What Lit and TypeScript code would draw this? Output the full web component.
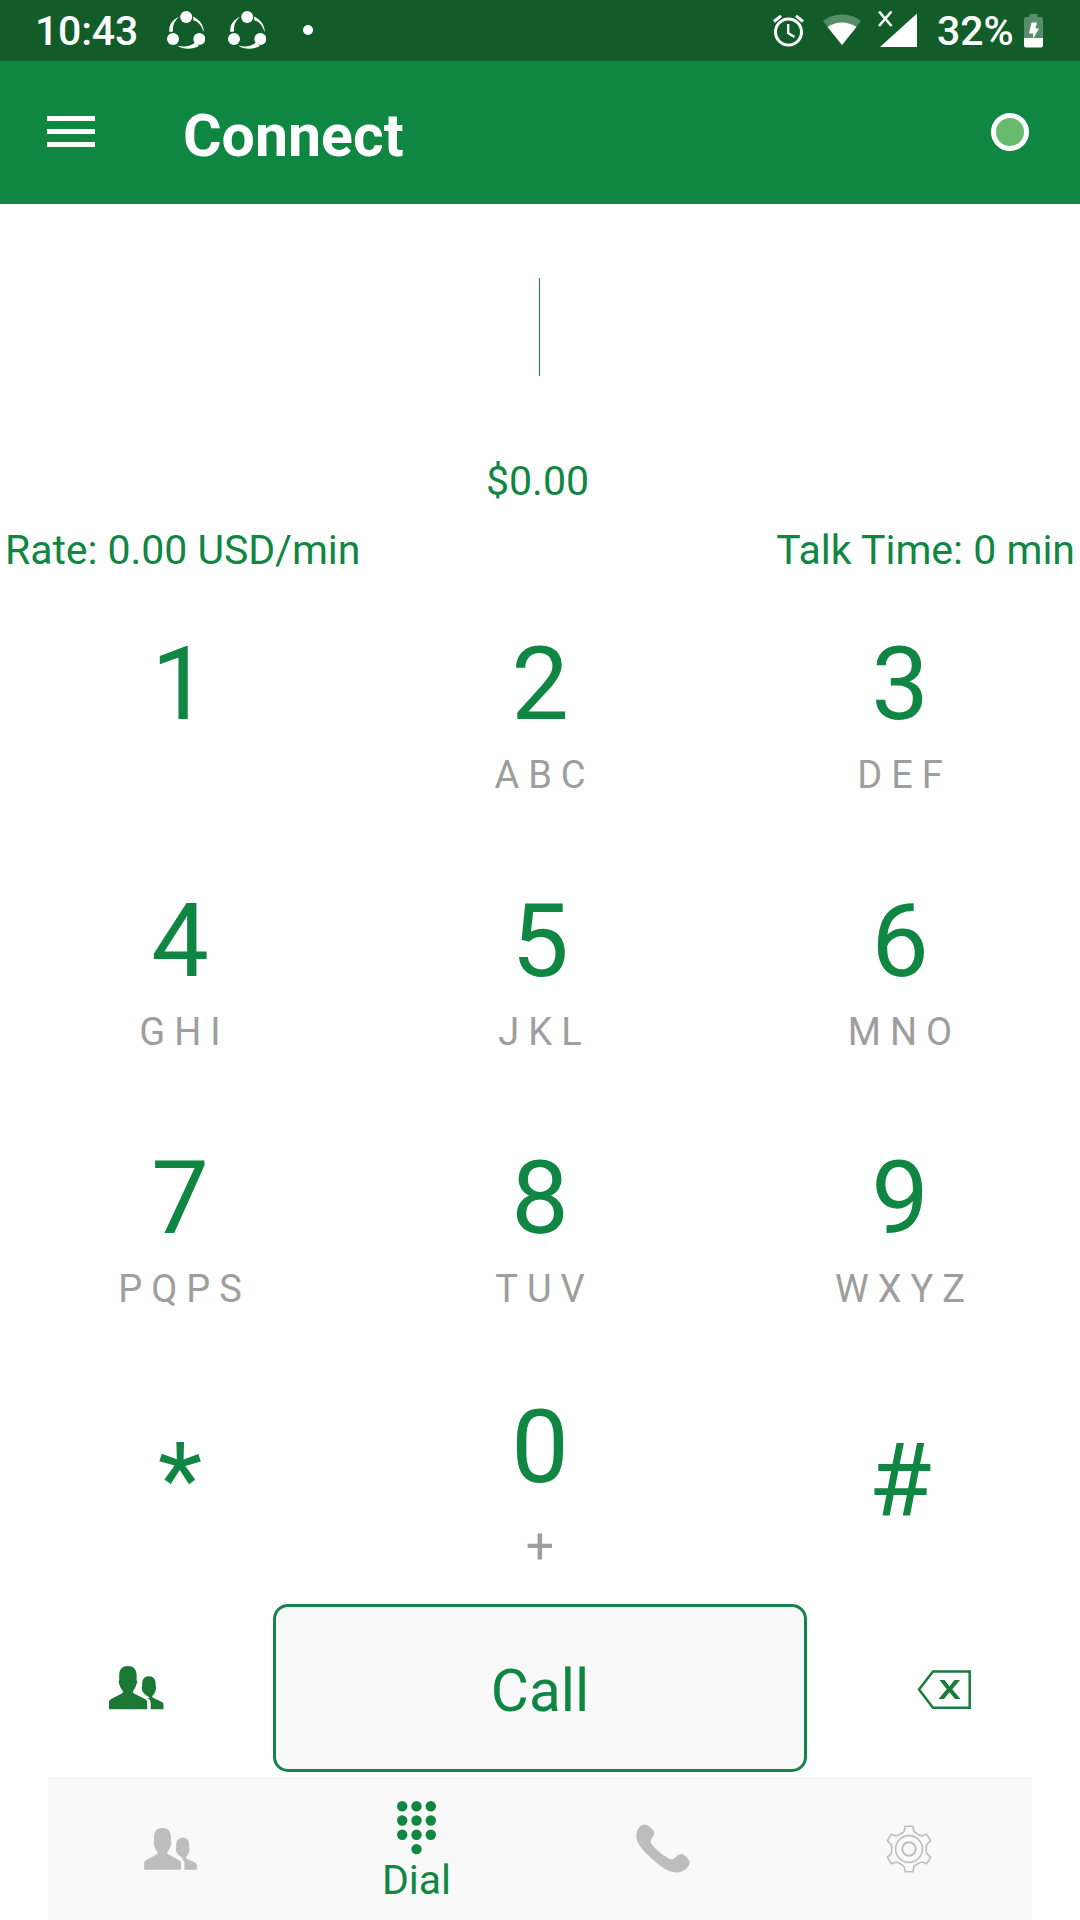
import { LitElement, html, css, svg } from "lit";
import { customElement, property } from "lit/decorators.js";

const people = svg`
  <path d="M10.2 8.500C10.600 3 13.400 0 18.900 0S27.200 3 27.600 8.500V14.200L28.300 15.500L27.300 19C26.500 21.500 25 23.800 23.800 25.200C23.800 26.600 24.600 27.400 26.500 28.300L35.500 32.800C37.300 33.800 38.200 34.600 38.200 36V43.300H0V36C0 34.600 0.900 33.800 2.700 32.800L11.300 28.300C13.200 27.400 14 26.600 14 25.200C12.800 23.800 11.300 21.500 10.500 19L9.500 15.500L10.200 14.200Z"/>
  <path d="M33.200 17C33.600 12.500 35.800 10.200 39.900 10.200S46.200 12.500 46.600 17V20.500L47.200 21.800L46.400 25C45.600 27.300 44.300 29.200 43.100 30.300C43.300 31.200 43.900 31.700 45 32.300L52 35.600C53.700 36.500 54.500 37.200 54.500 38.500V43.300H41.700V37C41.700 34.600 40.500 33.300 38.600 32.300L41 31.500C38 30 34.300 27.500 33.400 25L32.600 21.800L33.200 20.500Z"/>`;

const gearPath = (() => {
  const pts: string[] = [];
  for (let i = 0; i < 6; i++) {
    for (const [deg, r] of [[-23, 17.4], [-16, 18.2], [-9.5, 23.1], [9.5, 23.1], [16, 18.2], [23, 17.4]]) {
      const a = ((i * 60 + deg - 90) * Math.PI) / 180;
      pts.push(`${(24 + r * Math.cos(a)).toFixed(2)} ${(24 + r * Math.sin(a)).toFixed(2)}`);
    }
  }
  return `M${pts.join("L")}Z`;
})();

@customElement("status-bar")
export class StatusBar extends LitElement {
  static styles = css`
    :host {
      display: flex;
      flex: none;
      align-items: center;
      height: 61px;
      box-sizing: border-box;
      padding: 0 37px 0 35px;
      background: #115c29;
      color: #fff;
      font-size: 41px;
      font-weight: 500;
      line-height: 61px;
    }
    svg { display: block; flex: none; }
    .time { width: 132px; padding-top: 2px; letter-spacing: -0.2px; }
    .share { margin: 0 23px 1px 0; }
    .dot { width: 10px; height: 10px; border-radius: 50%; background: #fff; margin: 0 0 1px 14px; }
    .alarm { margin: 0 1px 1px auto; }
    .wifi { margin: 0 0 1px 18px; }
    .signal { margin: 0 0 3px 17px; }
    .percent { margin-left: 19px; width: 77px; padding-top: 2px; }
    .battery { margin-left: 10px; }
  `;
  private share() {
    return svg`<svg class="share" width="38" height="38" viewBox="0 0 38 38" fill="#fff">
      <circle cx="19.200" cy="6" r="6"/><circle cx="6" cy="28" r="6"/><circle cx="32.300" cy="28" r="6"/>
      <path d="M12.500 5.500C5.500 8.500 1.500 14 2.400 21L6 20.500C5.500 14.500 7.500 9.500 12.500 5.500Z"/>
      <path d="M26 5.500C32.500 8.500 37 14 36.800 21.300C34.500 14.500 31.500 10.500 26.500 9.500Z"/>
      <path d="M10 34.500C16 38.800 25 38.800 32 35L28 31.500C23.500 35.500 17 36.500 10 34.500Z"/>
    </svg>`;
  }
  render() {
    return html`
      <span class="time">10:43</span>
      ${this.share()}${this.share()}
      <span class="dot"></span>
      <svg class="alarm" width="31" height="33" viewBox="0 0 31 33" fill="none" stroke="#fff" stroke-width="3">
        <circle cx="15.500" cy="18" r="13"/>
        <path d="M1 7.500L8 1.800M30 7.500L23 1.800"/>
        <path d="M15.200 10V19L21.500 23" stroke-width="2.400"/>
      </svg>
      <svg class="wifi" width="38" height="32" viewBox="0 0 38 32" fill="#fff">
        <path opacity="0.300" d="M0 7Q8 0.500 19 0.500T38 7L19 31Z"/>
        <path d="M4.500 13Q11 8.500 19 8.500T33.500 13L19 31Z"/>
      </svg>
      <svg class="signal" width="40" height="37" viewBox="0 0 40 37" fill="#fff">
        <path d="M39 2.500V36H2Z"/>
        <path d="M1 0.500L13.500 15M13.500 0.500L1 15" stroke="#fff" stroke-width="2.600"/>
      </svg>
      <span class="percent">32%</span>
      <svg class="battery" width="19" height="34" viewBox="0 0 19 34" fill="#fff">
        <path opacity="0.300" d="M5.500 0H13.500V3H17Q19 3 19 5V24H0V5Q0 3 2 3H5.500Z"/>
        <path d="M0 24H19V31.500Q19 33.500 17 33.500H2Q0 33.500 0 31.500Z"/>
        <path d="M7.500 8.500H13L11.500 14.500H15L9 25V19.500H5Z"/>
      </svg>`;
  }
}

@customElement("app-header")
export class AppHeader extends LitElement {
  static styles = css`
    :host {
      display: flex;
      flex: none;
      align-items: center;
      height: 143px;
      box-sizing: border-box;
      padding: 0 51px 0 47px;
      background: #108643;
      color: #fff;
    }
    .menu { display: flex; flex-direction: column; gap: 8px; width: 48px; margin-bottom: 2px; }
    .bar { height: 5px; background: #fff; }
    .title { margin: 6px 0 0 88px; font-size: 59px; font-weight: 700; line-height: 68px; }
    .state {
      width: 38px; height: 38px; box-sizing: border-box; margin: 0 0 1px auto;
      border: 5px solid #fff; border-radius: 50%; background: #68bb6c;
    }
  `;
  render() {
    return html`
      <div class="menu"><span class="bar"></span><span class="bar"></span><span class="bar"></span></div>
      <div class="title">Connect</div>
      <span class="state"></span>`;
  }
}

@customElement("dial-key")
export class DialKey extends LitElement {
  @property() digit = "";
  @property() letters = "";
  static styles = css`
    :host { display: flex; flex-direction: column; align-items: center; }
    .digit { font-size: 102.5px; line-height: 120px; color: #108643; }
    .letters {
      height: 44px; margin-top: 9px; padding-left: 9px;
      font-size: 38px; line-height: 44px; letter-spacing: 9px; color: #9e9e9e;
    }
    .plus { padding: 0; font-size: 50px; letter-spacing: 0; margin-top: 17px; }
  `;
  render() {
    return html`<span class="digit">${this.digit}</span>
      <span class="letters ${this.letters === "+" ? "plus" : ""}">${this.letters}</span>`;
  }
}

const KEYS: [string, string][] = [
  ["1", ""], ["2", "ABC"], ["3", "DEF"],
  ["4", "GHI"], ["5", "JKL"], ["6", "MNO"],
  ["7", "PQPS"], ["8", "TUV"], ["9", "WXYZ"],
  ["*", ""], ["0", "+"], ["#", ""],
];

@customElement("app-root")
export class AppRoot extends LitElement {
  static styles = css`
    :host {
      display: flex;
      flex-direction: column;
      width: 1080px;
      height: 1920px;
      overflow: hidden;
      background: #fff;
      color: #108643;
      font-family: Roboto, "Liberation Sans", sans-serif;
    }
    svg { display: block; }
    .entry { display: flex; flex: none; justify-content: center; height: 98px; padding: 74px 0 80px; }
    .caret { width: 1px; margin-right: 1px; background: #108643; }
    .balance, .rates { flex: none; font-size: 41px; line-height: 48px; }
    .balance { text-align: center; margin-top: 1px; padding-right: 5px; }
    .rates { display: flex; justify-content: space-between; padding: 0 5px; margin-top: 21px; }
    .rate { letter-spacing: -0.05px; }
    .pad {
      display: grid;
      flex: none;
      grid-template-columns: repeat(3, 360px);
      grid-template-rows: 257px 257px 249px 217px;
      margin-top: 50px;
    }
    .low { padding-top: 33px; }
    .actions { display: grid; flex: none; grid-template-columns: 273px 534px 273px; height: 168px; align-items: center; }
    .call {
      height: 168px; box-sizing: border-box; border: 3px solid #178249; border-radius: 15px;
      background: #f9f9f9; text-align: center; font-size: 58.5px; line-height: 168px;
    }
    .contacts { margin-left: 109px; fill: #1b7734; }
    .erase { margin: 3px 0 0 110px; }
    .tabs {
      display: grid; flex: none; grid-template-columns: repeat(4, 246px); justify-content: center;
      width: 984px; height: 143px; margin: 5px auto 0; background: #f9f9f9;
    }
    .tab { display: flex; flex-direction: column; align-items: center; justify-content: center; padding-right: 1px; }
    .tab:last-child { padding-right: 0; }
    .active { justify-content: flex-start; padding-top: 24px; font-size: 41px; line-height: 48px; }
    .active svg { margin-bottom: 1px; }
  `;
  render() {
    const dots = [0, 1, 2].flatMap((r) => [0, 1, 2].map((c) => [c, r])).concat([[1, 3]]);
    return html`
      <status-bar></status-bar>
      <app-header></app-header>
      <div class="entry"><span class="caret"></span></div>
      <div class="balance">$0.00</div>
      <div class="rates"><span class="rate">Rate: 0.00 USD/min</span><span>Talk Time: 0 min</span></div>
      <div class="pad">
        ${KEYS.map(([d, l]) => html`<dial-key class=${d === "*" || d === "#" ? "low" : ""} .digit=${d} .letters=${l}></dial-key>`)}
      </div>
      <div class="actions">
        <svg class="contacts" width="55" height="44" viewBox="0 0 55 44">${people}</svg>
        <div class="call">Call</div>
        <svg class="erase" width="55" height="40" viewBox="0 0 55 40" fill="none" stroke="#1b7a3c">
          <path d="M16 1.500H52.700V37.800H16L2 19.600Z" stroke-width="2.500"/>
          <path d="M22.500 10H27.500L32.500 16.300L37.500 10H43L35.300 19.300L43.500 29H38L32.500 22.300L27 29H21.500L29.700 19.300Z" fill="#1b7a3c" stroke="none"/>
        </svg>
      </div>
      <div class="tabs">
        <div class="tab"><svg width="53" height="42" viewBox="0 0 54.5 43.5" fill="#bdbdbd">${people}</svg></div>
        <div class="tab active">
          <svg width="39" height="54" viewBox="0 0 39 54" fill="#108643">
            ${dots.map(([c, r]) => svg`<circle cx=${5.2 + c * 14.3} cy=${5.2 + r * 14.3} r="5.200"/>`)}
          </svg>
          <span>Dial</span>
        </div>
        <div class="tab">
          <svg width="54" height="49" viewBox="0 0 54 49" fill="#bdbdbd">
            <path d="M8.500 0.500C11.500 0.500 17 4.500 18.300 8.500C19 12 14.500 14.500 14.500 18C16 22.500 31 35.500 36 35.500C39.500 35 41.500 30 45 30C49 30.500 53.500 35 53.700 38.500C54 42.500 47.500 48.500 41 48.500C34 48.500 26 44 19 37.500C10 29.500 0.300 20.500 0.300 12C0.300 5.500 4.500 0.500 8.500 0.500Z"/>
          </svg>
        </div>
        <div class="tab">
          <svg width="48" height="48" viewBox="0 0 48 48" fill="none" stroke="#bdbdbd" stroke-width="1.600" stroke-linejoin="round">
            <path d=${gearPath}/><circle cx="24" cy="24" r="13.400"/><circle cx="24" cy="24" r="6.700" stroke-width="1.900"/>
          </svg>
        </div>
      </div>`;
  }
}
